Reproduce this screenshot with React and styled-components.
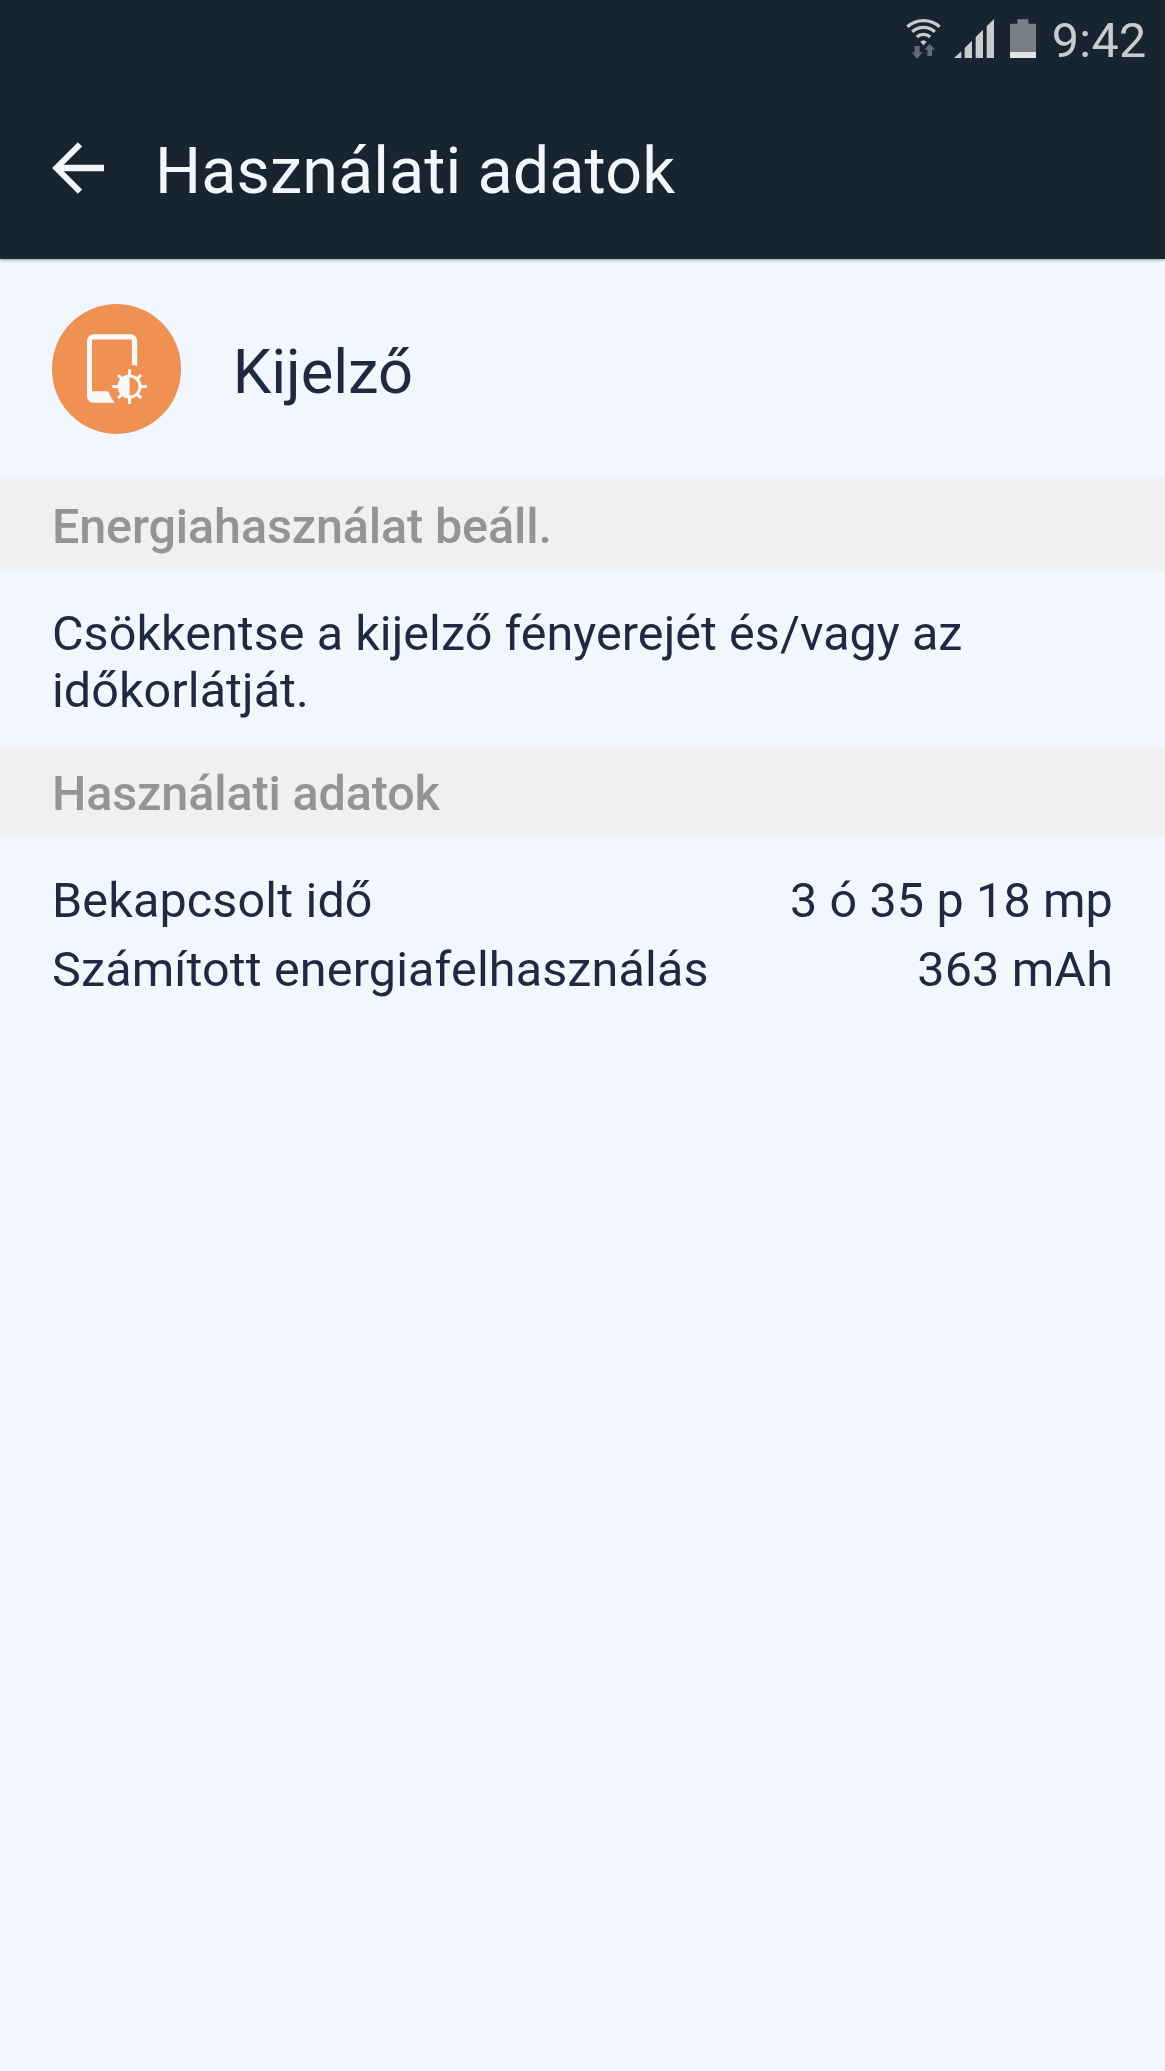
import React from 'react'
import styled, { createGlobalStyle } from 'styled-components'

const usage = [
  { label: 'Bekapcsolt idő', value: '3 ó 35 p 18 mp' },
  { label: 'Számított energiafelhasználás', value: '363 mAh' },
]

const rays = [0, 45, 90, 135, 180, 225, 270, 315]

const WifiIcon = () => (
  <svg width="35" height="46" viewBox="33 54 105 138">
    <g fill="none" stroke="#c9cccf" strokeWidth="10">
      <path d="M37 80.5A72 72 0 0 1 134 80.5" />
      <path d="M51.500 95A51 51 0 0 1 119.500 95" />
      <path d="M65.500 111A30 30 0 0 1 105.500 111" />
    </g>
    <path fill="#c9cccf" d="M76 125.500Q85.500 116 95 125.500L85.500 136z" />
    <path fill="#626c76" d="M59 138h15v19h9l-16.500 19-16.500-19h9z" />
    <path fill="#626c76" d="M97 168h14v-19h9l-16-18-16 18h9z" />
  </svg>
)

const SignalIcon = () => (
  <svg width="40" height="46" viewBox="176 54 120 138" fill="#c9cccf">
    <path d="M176 174L198 154v20z" />
    <path d="M208 174v-30l22-22v52z" />
    <path d="M241 174v-63l22-22v85z" />
    <path d="M274 174V79l22-22v117z" />
  </svg>
)

const BatteryIcon = () => (
  <svg width="26" height="46" viewBox="344 54 78 138">
    <path fill="#777e86" d="M344 71h22V58h33v13h23v85h-78z" />
    <path fill="#e2e4e6" d="M344 156h78v18h-78z" />
  </svg>
)

const BackIcon = () => (
  <svg width="52" height="52" viewBox="0 0 156 156" fill="none" stroke="#f2f7fe">
    <path strokeWidth="19" d="M12 78h144" />
    <path strokeWidth="18" d="M84 7L13 78l71 71" />
  </svg>
)

const DisplayIcon = () => (
  <svg width="129.5" height="129.5" viewBox="35 41 389 389">
    <path
      fill="#f9f9f9"
      d="M160 132H271a20 20 0 0 1 20 20v75q-8-3-16-3v-76H155v155h49q6 19 19 35H160a20 20 0 0 1-20-20V152a20 20 0 0 1 20-20z"
    />
    <circle cx="268" cy="289" r="31.5" fill="none" stroke="#f9f9f9" strokeWidth="9" />
    <path fill="#f9f9f9" d="M268 254a35 35 0 0 0 0 70z" />
    <g stroke="#f9f9f9" strokeWidth="9">
      {rays.map((angle) => (
        <path key={angle} d={angle % 90 ? 'M268 257v-17' : 'M268 257v-20'} transform={`rotate(${angle} 268 289)`} />
      ))}
    </g>
  </svg>
)

export default function App() {
  return (
    <>
      <GlobalStyle />
      <Screen>
        <Header>
          <StatusBar>
            <WifiIcon />
            <SignalIcon />
            <BatteryIcon />
            <Clock>9:42</Clock>
          </StatusBar>
          <AppBar>
            <Back aria-label="Vissza">
              <BackIcon />
            </Back>
            <Title>Használati adatok</Title>
          </AppBar>
        </Header>
        <Item>
          <Badge>
            <DisplayIcon />
          </Badge>
          <Name>Kijelző</Name>
        </Item>
        <SectionTitle>Energiahasználat beáll.</SectionTitle>
        <Hint>Csökkentse a kijelző fényerejét és/vagy az időkorlátját.</Hint>
        <SectionTitle>Használati adatok</SectionTitle>
        <List>
          {usage.map((row) => (
            <Row key={row.label}>
              <span>{row.label}</span>
              <span>{row.value}</span>
            </Row>
          ))}
        </List>
      </Screen>
    </>
  )
}

const GlobalStyle = createGlobalStyle`
*{
  box-sizing:border-box;
}
body{
  margin:0;
  background-color:#f2f7fe;
}
svg{
  display:block;
  flex-shrink:0;
}
`
const Screen = styled.div`
min-height:100vh;
background-color:#f2f7fe;
color:#1f2a40;
font-family:Roboto,"Liberation Sans",sans-serif;
font-size:48.5px;
line-height:57px;
`
const Header = styled.header`
height:259px;
background-color:#18242f;
box-shadow:0 1px 3px rgba(0,0,0,0.4);
`
const StatusBar = styled.div`
height:82px;
padding-right:18.5px;
display:flex;
align-items:center;
justify-content:flex-end;
svg + svg{
  margin-left:13px;
}
svg:nth-of-type(3){
  margin-left:16px;
}
`
const Clock = styled.span`
margin:0 0 2px 16px;
color:#c9cccf;
letter-spacing:0.3px;
`
const AppBar = styled.div`
height:177px;
padding:0 52px;
display:flex;
align-items:center;
`
const Back = styled.button`
margin:0 51px 5px 0;
padding:0;
border:none;
background:none;
cursor:pointer;
`
const Title = styled.h1`
margin:0;
color:#f2f7fe;
font-size:64.7px;
font-weight:400;
line-height:76px;
letter-spacing:0.08px;
`
const Item = styled.div`
height:220px;
padding:0 51.7px;
display:flex;
align-items:center;
`
const Badge = styled.div`
width:129.5px;
height:129.5px;
border-radius:50%;
background-color:#ee9152;
`
const Name = styled.h2`
margin:0 0 0 51.5px;
padding-top:6px;
font-size:61.5px;
font-weight:400;
line-height:72px;
letter-spacing:-0.1px;
`
const SectionTitle = styled.h3`
height:89.5px;
margin:0;
padding:18.7px 52px 0;
background-color:#f0f0f0;
color:#949494;
font-size:48.5px;
font-weight:500;
letter-spacing:-0.14px;
`
const Hint = styled.p`
height:178px;
margin:0;
padding:36px 52px 0;
letter-spacing:0.05px;
`
const List = styled.div`
padding:30.5px 52px;
`
const Row = styled.div`
height:68.7px;
display:flex;
align-items:center;
justify-content:space-between;
letter-spacing:0.14px;
`
